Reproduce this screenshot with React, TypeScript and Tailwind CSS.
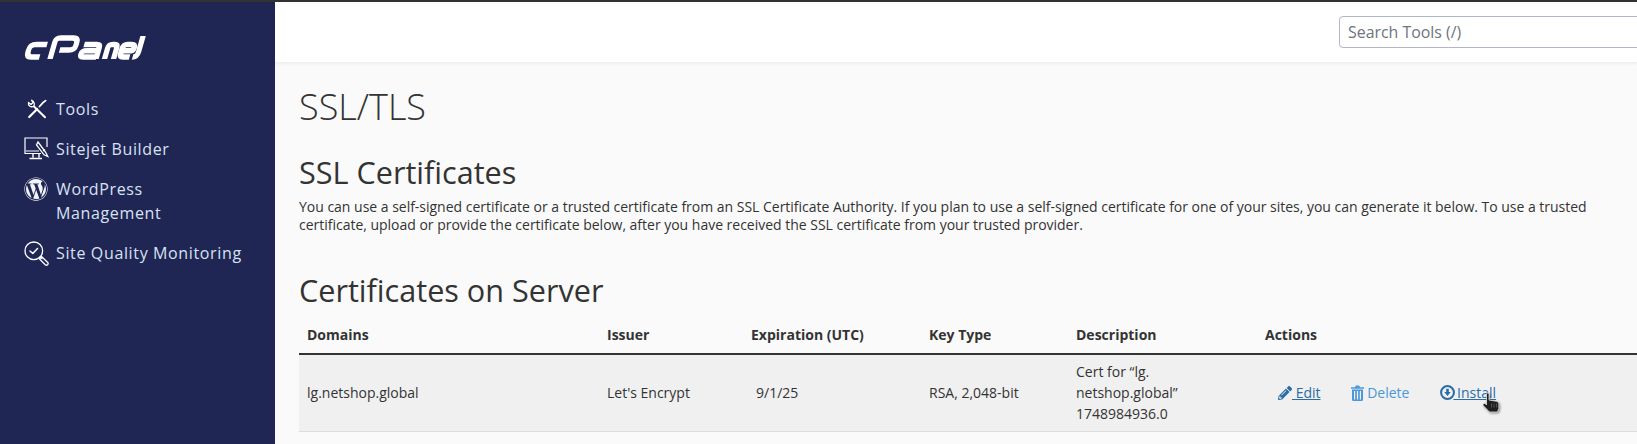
import React from "react";
import { FaWordpress, FaPencilAlt } from "react-icons/fa";

const Logo = () => (
  <svg width="122" height="26" viewBox="0 0 122 26" role="img" aria-label="cPanel" className="overflow-visible">
    <g transform="matrix(1,0,-0.287,1,6.9,0)" fill="none" stroke="#ffffff" strokeWidth={5.4} strokeLinecap="butt" strokeLinejoin="round">
      <path d="M19 9.5 H7.5 Q2 9.5 2 15 V17 Q2 22 7 22 H15" />
      <path d="M26 24 V7 Q26 3 30 3 H43 Q48 3 48 8 V10.5 Q48 15 43 15 H33" />
      <path d="M56 9.5 H68 Q72 9.5 72 13 V24 M72 15.8 H60 Q55.5 15.8 55.5 19 Q55.5 22 59 22 H72" />
      <path d="M80.5 24 V13 Q80.5 9.5 84 9.5 H86 Q89.5 9.5 89.5 13 V24" />
      <path d="M96 15.8 H105 Q107 15.8 107 13.5 Q107 9.5 103 9.5 H99 Q95 9.5 95 14 V18 Q95 22 99 22 H105" />
      <path d="M112.5 1 V17 Q112.5 22 108 22" />
    </g>
  </svg>
);
const Tools = () => (
  <svg width="20" height="20" viewBox="0 0 20 20" fill="none" stroke="#fff" strokeLinecap="round" strokeLinejoin="round">
    <path d="M7 7.5 L18 18.2" strokeWidth="2" />
    <path d="M1.5 3.5 C0.8 6.5 3.5 8.6 6.6 7.4 C8 6 7.6 2.6 4.6 1.2 L6 3.6 L4 5.4 Z" strokeWidth="1.3" />
    <path d="M18.6 1.6 L16.5 3.2 L12.5 7.5" strokeWidth="1.8" />
    <path d="M10.2 10 L2.2 18" strokeWidth="2.2" />
  </svg>
);
const Monitor = () => (
  <svg width="25" height="24" viewBox="0 0 25 24" fill="none" stroke="#fff" strokeWidth="1.2">
    <path d="M17 16.5 H1 V1 H23 V10" />
    <path d="M1 14 H15" strokeWidth="1.5" stroke="#aeb4cb" />
    <path d="M9 17 V20.5 M15 17 V20.5 M5.5 21.5 H18" strokeWidth="1.4" />
    <path d="M14 5 L21.5 15 L23.8 19.5 L20 17.8 L12.5 8 Z" fill="#1f2654" strokeWidth="1.3" />
    <path d="M19 14 L21 12.5" />
  </svg>
);
const QualityIcon = () => (
  <svg width="25" height="25" viewBox="0 0 25 25" fill="none" stroke="#fff" strokeWidth="1.3" strokeLinecap="round" strokeLinejoin="round">
    <circle cx="9.8" cy="9.8" r="8.8" />
    <path d="M6 10 L8.8 12.5 L13.5 7.5" strokeWidth="1.5" />
    <path d="M16 16 L18 17.5" />
    <path d="M17.5 15.5 L24 21.8 C24.5 23.5 23 24.8 21.5 24 L15.5 18 Z" />
  </svg>
);
const Trash = () => (
  <svg width="13" height="16" viewBox="0 0 13 16" fill="#4d97d8">
    <path d="M0 2.2 H4 L4.8 0.5 H8.2 L9 2.2 H13 V3.8 H0 Z" />
    <path fillRule="evenodd" d="M1 4.6 H12 V14.5 C12 15.3 11.5 16 10.7 16 H2.3 C1.5 16 1 15.3 1 14.5 Z M3 6 V14.6 H4.2 V6 Z M5.9 6 V14.6 H7.1 V6 Z M8.8 6 V14.6 H10 V6 Z" />
  </svg>
);
const Download = () => (
  <svg width="15" height="15" viewBox="0 0 14 14">
    <circle cx="7" cy="7" r="6" fill="none" stroke="#2a6da6" strokeWidth="1.9" />
    <path d="M5.8 3.4 H8.2 V6.6 H10 L7 10.2 L4 6.6 H5.8 Z" fill="#2a6da6" />
  </svg>
);
const Cursor = () => (
  <svg width="18" height="21" viewBox="0 0 18 21" className="absolute left-[1482px] top-[392px] drop-shadow-[1px_1px_1px_rgba(0,0,0,0.45)]">
    <path d="M4.5 2 C4.5 0.5 7 0.5 7 2 V8 L14.5 9.3 C16 9.7 16.8 11 16.8 12.5 V16.5 L15.5 20 H7.5 L1.2 13.5 C0.4 12 2.3 10.7 3.4 11.8 L4.5 13 Z" fill="#1f1f1f" stroke="#f4f4f4" strokeWidth="0.7" />
    <path d="M9.5 11.5 V15.5 M12 11.5 V15.5 M14.5 11.5 V15.5" stroke="#777" strokeWidth="0.6" />
  </svg>
);

const Nav = ({ icon, children, className = "" }: { icon: React.ReactNode; children: React.ReactNode; className?: string }) => (
  <div className={`flex items-start ${className}`}>
    <span className="flex w-[32px] shrink-0 justify-start">{icon}</span>
    <span>{children}</span>
  </div>
);

export default function App() {
  return (
    <div className="relative h-[444px] w-[1637px] overflow-hidden bg-[#fafafa] font-['Open_Sans',sans-serif] text-[#333333]">
      <div className="h-[2px] bg-[#333333]" />
      <div className="flex h-[442px]">
        <aside className="w-[275px] shrink-0 bg-[#1f2654] pl-[24px] text-[16px] leading-[24px] tracking-[0.64px] text-[#d9e1f2]">
          <div className="mt-[33px] h-[26px]"><Logo /></div>
          <nav className="mt-[36px] flex flex-col">
            <Nav icon={<span className="ml-[3px] mt-[2px]"><Tools /></span>}>Tools</Nav>
            <Nav className="mt-[16px]" icon={<Monitor />}>Sitejet Builder</Nav>
            <Nav className="mt-[16px]" icon={<FaWordpress size={24} color="#f2f4fa" />}>WordPress<br />Management</Nav>
            <Nav className="mt-[16px]" icon={<QualityIcon />}>Site Quality Monitoring</Nav>
          </nav>
        </aside>
        <main className="min-w-0 flex-1">
          <header className="flex h-[60px] items-start justify-end bg-white pt-[14px] shadow-[0_1px_4px_rgba(0,0,0,0.08)]">
            <div className="h-[32px] w-[320px] shrink-0 translate-x-[22px] rounded-[4px] border border-[#b3b6c9] bg-white pl-[8px] text-[15.9px] leading-[31px] text-[#6c757d]">Search Tools (/)</div>
          </header>
          <div className="pl-[24px]">
            <h1 className="mt-[21px] text-[36px] font-light leading-[48px] text-[#333333]">SSL/TLS</h1>
            <h2 className="mt-[21px] text-[30.6px] font-medium leading-[40px]">SSL Certificates</h2>
            <p className="mt-[6px] w-[1320px] text-[14px] leading-[18px] tracking-[-0.015px]">You can use a self-signed certificate or a trusted certificate from an SSL Certificate Authority. If you plan to use a self-signed certificate for one of your sites, you can generate it below. To use a trusted certificate, upload or provide the certificate below, after you have received the SSL certificate from your trusted provider.</p>
            <h2 className="mt-[36px] text-[30.6px] font-medium leading-[40px]">Certificates on Server</h2>
            <table className="mt-[5px] w-[1338px] table-fixed border-collapse text-[14px] leading-[21px]">
              <thead>
                <tr className="border-b-2 border-[#333333] text-left font-bold">
                  <th className="h-[39px] w-[300px] pl-[8px] align-middle">Domains</th>
                  <th className="w-[144px] pl-[8px]">Issuer</th>
                  <th className="w-[178px] pl-[8px]">Expiration (UTC)</th>
                  <th className="w-[147px] pl-[8px]">Key Type</th>
                  <th className="w-[189px] pl-[8px]">Description</th>
                  <th className="pl-[8px]">Actions</th>
                </tr>
              </thead>
              <tbody>
                <tr className="border-b border-[#dddddd] bg-[#f0f0f0]">
                  <td className="h-[77px] pl-[8px]">lg.netshop.global</td>
                  <td className="pl-[8px]">Let's Encrypt</td>
                  <td className="pl-[13px]">9/1/25</td>
                  <td className="pl-[8px]">RSA, 2,048-bit</td>
                  <td className="pl-[8px] pr-[10px]">Cert for “lg.<br />netshop.global”<br />1748984936.0</td>
                  <td className="pl-[21px]">
                    <div className="flex items-center">
                      <a className="flex items-center text-[#2a6da6] underline"><FaPencilAlt size={14} color="#2a6da6" /><span>&nbsp;Edit</span></a>
                      <a className="ml-[30px] flex items-center text-[#4d97d8]"><Trash /><span>&nbsp;Delete</span></a>
                      <a className="ml-[31px] flex items-center text-[#2a6da6] underline"><Download /><span className="-ml-[2px]">&nbsp;Install</span></a>
                    </div>
                  </td>
                </tr>
              </tbody>
            </table>
          </div>
        </main>
      </div>
      <Cursor />
    </div>
  );
}
